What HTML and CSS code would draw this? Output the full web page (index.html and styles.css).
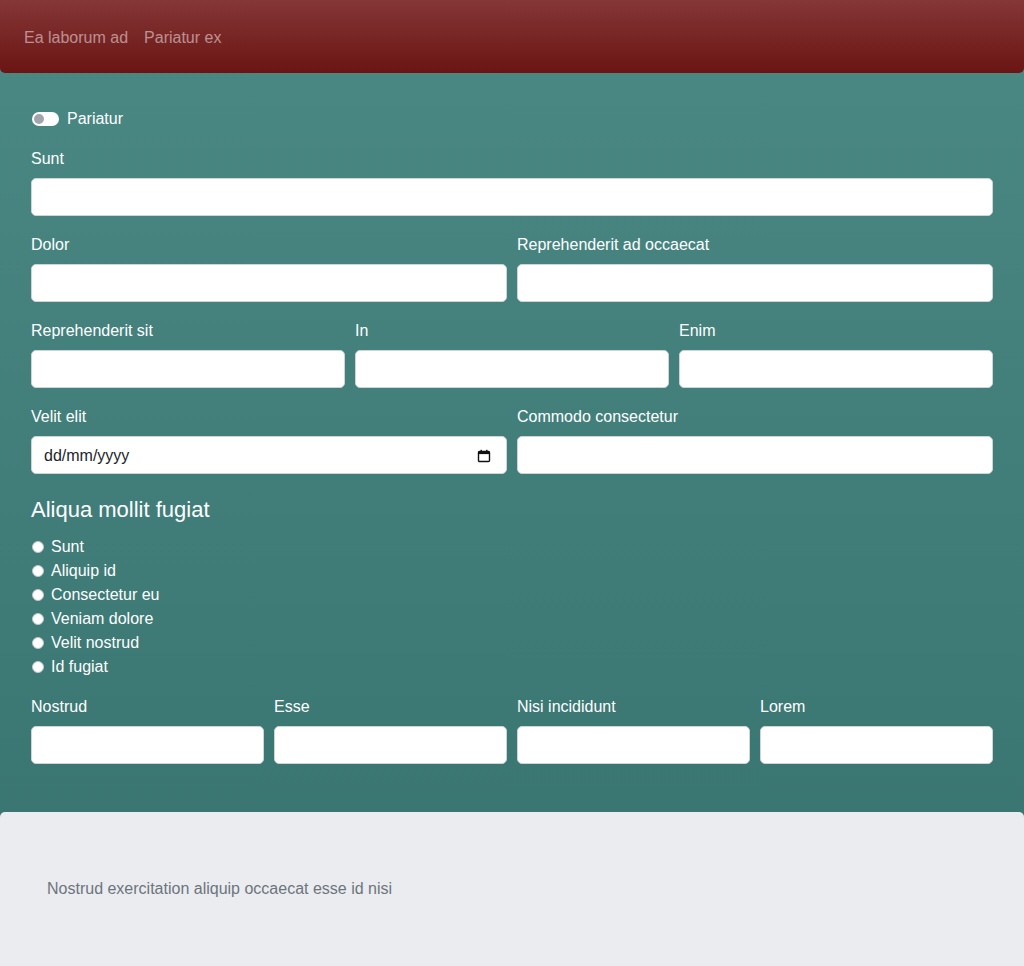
FILE: index.html
```html
<!DOCTYPE html>
<html lang="en">
<head>
<meta charset="utf-8">
<title>Form</title>
<link rel="stylesheet" href="styles.css">
</head>
<body>
<header class="topbar">
  <nav class="nav">
    <a class="nav-link" href="#">Ea laborum ad</a>
    <a class="nav-link" href="#">Pariatur ex</a>
  </nav>
</header>
<main class="main">
  <form class="form">
    <div class="switch-row">
      <span class="switch"><span class="knob"></span></span>
      <span class="switch-label">Pariatur</span>
    </div>
    <div class="row cols-1">
      <div class="field"><label class="label">Sunt</label><input class="input" type="text"></div>
    </div>
    <div class="row cols-2">
      <div class="field"><label class="label">Dolor</label><input class="input" type="text"></div>
      <div class="field"><label class="label">Reprehenderit ad occaecat</label><input class="input" type="text"></div>
    </div>
    <div class="row cols-3">
      <div class="field"><label class="label">Reprehenderit sit</label><input class="input" type="text"></div>
      <div class="field"><label class="label">In</label><input class="input" type="text"></div>
      <div class="field"><label class="label">Enim</label><input class="input" type="text"></div>
    </div>
    <div class="row cols-2">
      <div class="field"><label class="label">Velit elit</label>
        <div class="input date">
          <span class="date-text">dd/mm/yyyy</span>
          <svg class="cal" width="14" height="14" viewBox="0 0 14 14"><rect x="1.5" y="2.5" width="11" height="10" rx="1" fill="none" stroke="#111" stroke-width="1.4"/><rect x="1.5" y="2.5" width="11" height="2.6" fill="#111"/><rect x="3.5" y="0.8" width="1.4" height="2.5" fill="#111"/><rect x="9.1" y="0.8" width="1.4" height="2.5" fill="#111"/></svg>
        </div>
      </div>
      <div class="field"><label class="label">Commodo consectetur</label><input class="input" type="text"></div>
    </div>
    <h4 class="heading">Aliqua mollit fugiat</h4>
    <div class="radios">
      <div class="radio-row"><span class="radio"></span><span>Sunt</span></div>
      <div class="radio-row"><span class="radio"></span><span>Aliquip id</span></div>
      <div class="radio-row"><span class="radio"></span><span>Consectetur eu</span></div>
      <div class="radio-row"><span class="radio"></span><span>Veniam dolore</span></div>
      <div class="radio-row"><span class="radio"></span><span>Velit nostrud</span></div>
      <div class="radio-row"><span class="radio"></span><span>Id fugiat</span></div>
    </div>
    <div class="row cols-4">
      <div class="field"><label class="label">Nostrud</label><input class="input" type="text"></div>
      <div class="field"><label class="label">Esse</label><input class="input" type="text"></div>
      <div class="field"><label class="label">Nisi incididunt</label><input class="input" type="text"></div>
      <div class="field"><label class="label">Lorem</label><input class="input" type="text"></div>
    </div>
  </form>
</main>
<footer class="footer">
  <p class="footer-text">Nostrud exercitation aliquip occaecat esse id nisi</p>
</footer>
</body>
</html>
```
FILE: styles.css
```css
* { box-sizing: border-box; }
html, body { margin: 0; padding: 0; }
body {
  font-family: "Liberation Sans", Arial, sans-serif;
  font-size: 16px;
  line-height: 24px;
  color: #fff;
  background: linear-gradient(#4b8985, #37726e);
  min-height: 966px;
  display: flex;
  flex-direction: column;
}
.topbar {
  background: linear-gradient(#853637, #6a1513);
  border-radius: 0 0 5px 5px;
  padding: 17px 16px 16px;
  height: 73px;
}
.nav { display: flex; }
.nav-link {
  display: block;
  padding: 9px 8px 7px;
  color: rgba(255, 255, 255, 0.5);
  text-decoration: none;
  line-height: 24px;
}
.main { padding: 34px 31px 32px; }
.form { display: flex; flex-direction: column; }
.switch-row {
  display: flex;
  align-items: center;
  height: 24px;
  margin-bottom: 15px;
}
.switch {
  width: 27px;
  height: 14px;
  border-radius: 7px;
  background: #fff;
  display: flex;
  align-items: center;
  padding-left: 2px;
  margin-right: 8px;
  margin-left: 1px;
}
.knob {
  width: 10px;
  height: 10px;
  border-radius: 50%;
  background: #a2a5ab;
}
.row {
  display: grid;
  column-gap: 10px;
  margin-bottom: 16px;
}
.cols-1 { grid-template-columns: 1fr; }
.cols-2 { grid-template-columns: 1fr 1fr; }
.cols-3 { grid-template-columns: 1fr 1fr 1fr; }
.cols-4 { grid-template-columns: 1fr 1fr 1fr 1fr; }
.field { display: flex; flex-direction: column; }
.label {
  display: block;
  line-height: 24px;
  padding-top: 1px;
  margin-bottom: 7px;
}
.input {
  display: block;
  width: 100%;
  height: 38px;
  border: 1px solid #ced4da;
  border-radius: 5px;
  background: #fff;
  font: inherit;
  padding: 6px 12px;
  color: #212529;
}
.date {
  display: flex;
  align-items: center;
  justify-content: space-between;
  padding: 1px 15px 0 12px;
}
.date-text { color: #212529; }
.cal { display: block; }
.heading {
  font-size: 22px;
  font-weight: normal;
  line-height: 30px;
  margin: 5px 0 10px;
}
.radios { margin-bottom: 15px; }
.radio-row {
  display: flex;
  align-items: center;
  height: 24px;
}
.radio {
  width: 12px;
  height: 12px;
  border-radius: 50%;
  background: #fff;
  border: 1px solid #bfc5c9;
  margin-left: 1px;
  margin-right: 7px;
}
.footer {
  flex: 1;
  background: #ebecef;
  border-radius: 5px 5px 0 0;
  padding: 65px 47px 48px;
}
.footer-text {
  margin: 0;
  color: #6c757d;
  line-height: 24px;
}
```
